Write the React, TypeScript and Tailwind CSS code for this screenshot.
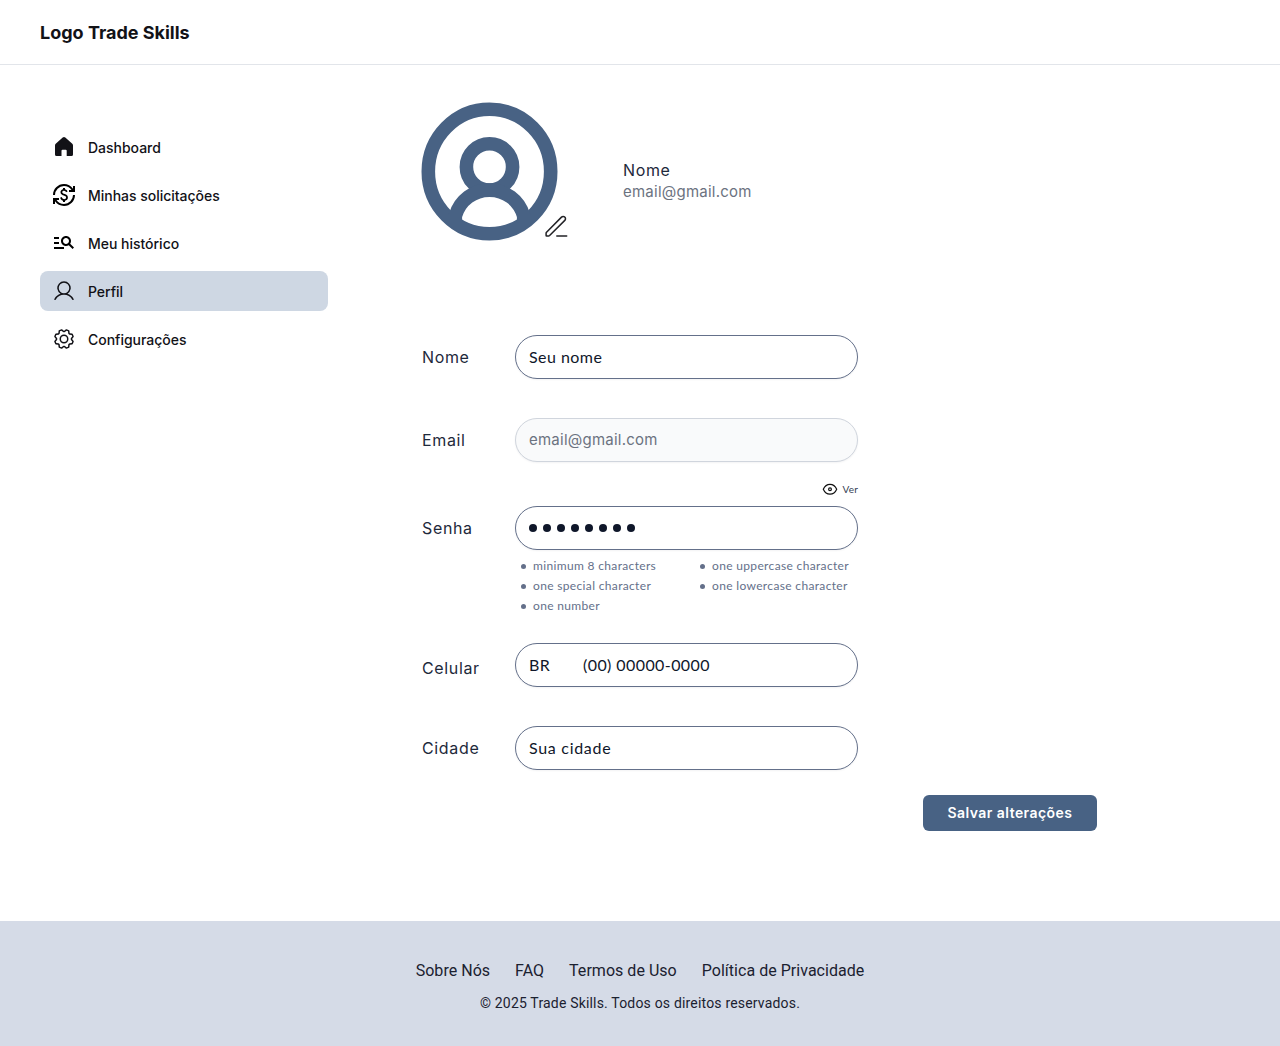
import { MdCurrencyExchange, MdManageSearch } from "react-icons/md";
import { PiUser, PiGear } from "react-icons/pi";
import type { ReactNode } from "react";

function HomeIcon() {
  return (
    <svg className="size-6" viewBox="0 0 24 24" fill="#121217">
      <path d="M10.7 2.6a2 2 0 0 1 2.6 0l7 6.2a2.2 2.2 0 0 1 .7 1.6V19.5a1.5 1.5 0 0 1-1.5 1.5h-4.8v-5.2a1 1 0 0 0-1-1h-3.200a1 1 0 0 0-1 1V21H4.500a1.500 1.500 0 0 1-1.500-1.500V10.400a2.200 2.200 0 0 1 .7-1.600z" />
    </svg>
  );
}

function EyeIcon() {
  return (
    <svg className="size-4" viewBox="0 0 16 16" fill="none" stroke="#111111" strokeWidth="1.2" strokeLinejoin="round">
      <path d="M1.300 8.300C2.700 5.100 5.200 3.400 8 3.400S13.300 5.100 14.700 8.300C13.300 11.500 10.800 13.200 8 13.200S2.700 11.500 1.300 8.300z" />
      <circle cx="8" cy="8.300" r="1.400" />
    </svg>
  );
}

function Avatar() {
  return (
    <svg className="h-[139px] w-[137px]" viewBox="0 0 137 139" fill="none" stroke="#486284" strokeWidth="13.600">
      <ellipse cx="68.500" cy="69.500" rx="61.200" ry="62.200" />
      <circle cx="68.500" cy="64.900" r="23.100" />
      <path d="M34.300 120v-6C38.800 98 52.800 88.100 68.500 88.100S98.200 98 102.700 114v6" />
    </svg>
  );
}

function EditIcon() {
  return (
    <svg className="absolute left-[123px] top-[112px] size-6" viewBox="0 0 24 24" fill="none" stroke="#222226" strokeWidth="1.500" strokeLinejoin="round" strokeLinecap="round">
      <path d="M2.300 18.500 17.500 3.100a2.300 2.300 0 0 1 3.300 0 2.300 2.300 0 0 1 0 3.300L5.600 21.500a1.500 1.500 0 0 1-1 .4H2.600a.5.5 0 0 1-.5-.5v-2.300q0-.4.2-.6zM12.800 21.900h9.900" />
    </svg>
  );
}

const nav = [
  { label: "Dashboard", icon: <HomeIcon /> },
  { label: "Minhas solicitações", icon: <MdCurrencyExchange className="size-6 text-black" /> },
  { label: "Meu histórico", icon: <MdManageSearch className="size-6 -translate-y-px text-black" /> },
  { label: "Perfil", icon: <PiUser className="size-6" />, active: true },
  { label: "Configurações", icon: <PiGear className="size-6" /> },
];

const input =
  "flex h-11 w-[343px] items-center rounded-[22px] border border-[#64708a] bg-white px-[13px] font-['Lato',sans-serif] text-base text-[#0f172a] shadow-[0_1px_2px_rgba(16,24,40,0.05)]";

function Row({ label, labelClass = "", className = "", children }: { label: string; labelClass?: string; className?: string; children: ReactNode }) {
  return (
    <div className={`flex items-start ${className}`}>
      <div className={`w-[93px] shrink-0 text-base leading-6 tracking-[0.65px] text-[#1e293b] ${labelClass}`}>{label}</div>
      <div>{children}</div>
    </div>
  );
}

function Rule({ children }: { children: string }) {
  return (
    <li className="flex h-5 items-center gap-[7px]">
      <span className="mt-px size-[5px] rounded-full bg-[#64708a]" />
      <span className="whitespace-nowrap tracking-[0.34px]">{children}</span>
    </li>
  );
}

export default function App() {
  return (
    <div className="flex h-[1046px] w-[1280px] flex-col bg-white font-['Inter',sans-serif] text-[#121217]">
      <header className="flex h-[65px] shrink-0 items-center border-b border-[#e2e5ea] px-10 pt-px">
        <h1 className="text-lg font-bold">Logo Trade Skills</h1>
      </header>

      <div className="flex grow">
        <nav className="ml-10 mt-[62px] flex w-72 flex-col gap-2">
          {nav.map((item) => (
            <a key={item.label} className={`flex h-10 items-center gap-3 rounded-lg px-3 text-sm font-medium ${item.active ? "bg-[#ced7e3]" : ""}`}>
              {item.icon}
              <span className="pt-px tracking-[-0.02px]">{item.label}</span>
            </a>
          ))}
        </nav>

        <main className="ml-[94px] mt-[37px]">
          <section className="flex h-[233px] items-start">
            <div className="relative -ml-px">
              <Avatar />
              <EditIcon />
            </div>
            <div className="ml-[65px] mt-14">
              <p className="text-base leading-6 tracking-[0.65px] text-[#1e293b]">Nome</p>
              <p className="text-[15px] leading-5 tracking-[0.24px] text-[#6b7280]">email@gmail.com</p>
            </div>
          </section>

          <Row label="Nome" labelClass="mt-[10px]">
            <div className={`${input} tracking-[0.45px]`}>Seu nome</div>
          </Row>
          <Row label="Email" labelClass="mt-[10px]" className="mt-[39px]">
            <div className="flex h-11 w-[343px] items-center rounded-[22px] border border-[#d0d5dd] bg-[#f9fafb] px-[13px] text-[15px] tracking-[0.24px] text-[#6b7280] shadow-[0_1px_2px_rgba(16,24,40,0.05)]">
              email@gmail.com
            </div>
          </Row>
          <Row label="Senha" labelClass="mt-[54px]">
            <div className="flex h-11 items-end justify-end gap-1 pb-[9px] font-['Lato',sans-serif] text-[10px] text-[#344054]">
              <EyeIcon />
              <span className="leading-4 tracking-[0.2px]">Ver</span>
            </div>
            <div className={input}>
              <div className="flex gap-1.5">
                {Array.from({ length: 8 }, (_, i) => (
                  <span key={i} className="size-2 rounded-full bg-[#0f172a]" />
                ))}
              </div>
            </div>
            <div className="mt-1.5 flex pl-1.5 font-['Lato',sans-serif] text-xs text-[#64708a]">
              <ul className="w-[179px]">
                <Rule>minimum 8 characters</Rule>
                <Rule>one special character</Rule>
                <Rule>one number</Rule>
              </ul>
              <ul>
                <Rule>one uppercase character</Rule>
                <Rule>one lowercase character</Rule>
              </ul>
            </div>
          </Row>
          <Row label="Celular" labelClass="mt-[13px]" className="mt-[27px]">
            <div className={`${input} tracking-[0.42px]`}>
              <span className="w-[54px]">BR</span>
              <span>(00) 00000-0000</span>
            </div>
          </Row>
          <Row label="Cidade" labelClass="mt-[10px]" className="mt-[39px]">
            <div className={`${input} tracking-[0.7px]`}>Sua cidade</div>
          </Row>

          <button className="ml-[501px] mt-[25px] flex h-9 w-[174px] items-center justify-center rounded-md bg-[#486284] text-sm font-semibold tracking-[0.45px] text-white">
            Salvar alterações
          </button>
        </main>
      </div>

      <footer className="flex h-[125px] shrink-0 flex-col items-center bg-[#d5dbe7] pt-[38px] font-['Roboto',sans-serif] text-[#1b2130]">
        <div className="flex gap-[25px] text-base leading-6 tracking-[0.03px]">
          <a>Sobre Nós</a>
          <a>FAQ</a>
          <a>Termos de Uso</a>
          <a>Política de Privacidade</a>
        </div>
        <p className="mt-[10px] text-sm leading-5 tracking-[0.18px]">© 2025 Trade Skills. Todos os direitos reservados.</p>
      </footer>
    </div>
  );
}
